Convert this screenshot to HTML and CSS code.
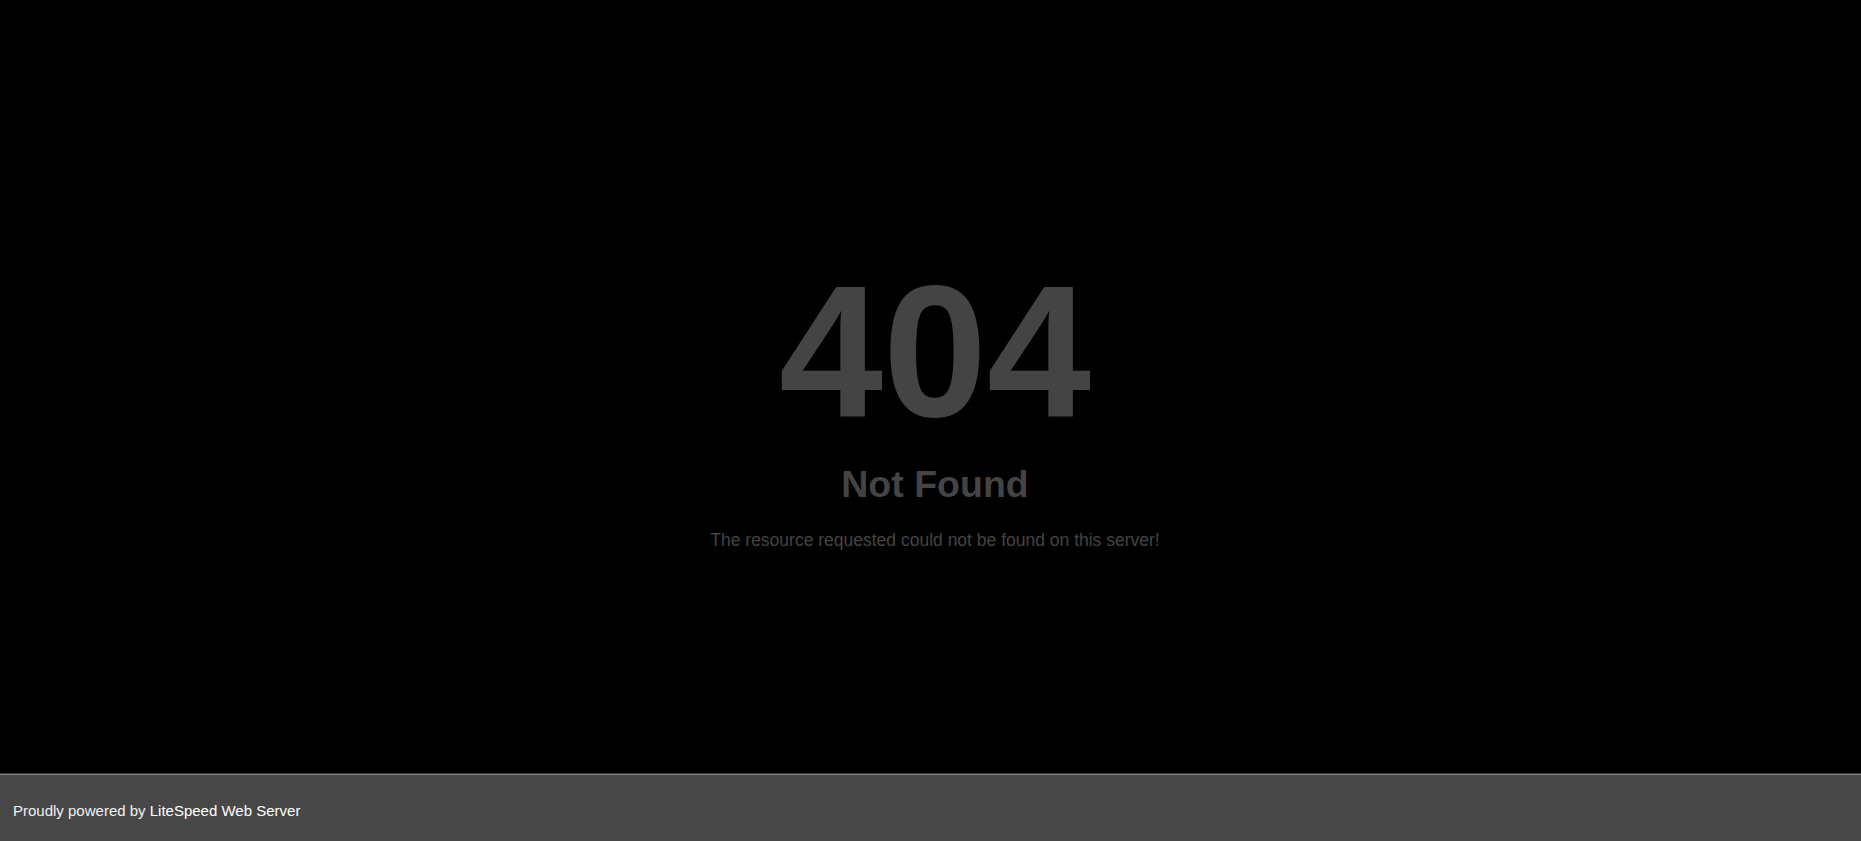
FILE: index.html
```html
<!DOCTYPE html>
<html lang="en">
<head>
<meta charset="utf-8">
<title>404 Not Found</title>
<link rel="stylesheet" href="styles.css">
</head>
<body>
<main class="content">
  <h1 class="code">404</h1>
  <h2 class="title">Not Found</h2>
  <p class="message">The resource requested could not be found on this server!</p>
</main>
<footer class="footer">
  <span class="footer-text">Proudly powered by <a class="footer-link" href="#">LiteSpeed Web Server</a></span>
</footer>
</body>
</html>
```
FILE: styles.css
```css
html, body {
  margin: 0;
  padding: 0;
  height: 100%;
}
body {
  background: #000;
  font-family: "Liberation Sans", Arial, sans-serif;
  display: flex;
  flex-direction: column;
}
.content {
  flex: 1;
  display: flex;
  flex-direction: column;
  align-items: center;
  padding-top: 258px;
  padding-left: 9px;
  color: #444;
  text-align: center;
}
.code {
  margin: 0;
  font-size: 187px;
  line-height: 187px;
  font-weight: 700;
  color: #444;
}
.title {
  margin: 21px 0 0;
  font-size: 37.5px;
  line-height: 37.5px;
  font-weight: 700;
  color: #444;
}
.message {
  margin: 28px 0 0;
  font-size: 17.5px;
  line-height: 17.5px;
  color: #444;
}
.footer {
  height: 68px;
  box-sizing: border-box;
  flex: none;
  background: #474747;
  border-top: 1px solid #3a3a3a;
  box-shadow: inset 0 1px 0 rgba(255, 255, 255, 0.3);
  padding: 28px 13px 0;
  color: #f0f0f0;
  font-size: 15px;
}
.footer-link {
  color: #fff;
  text-decoration: none;
}
```
